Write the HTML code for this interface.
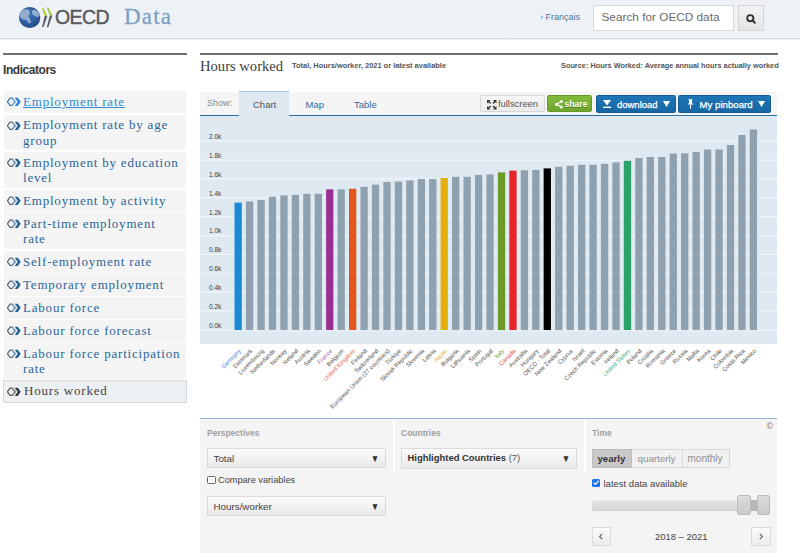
<!DOCTYPE html>
<html><head><meta charset="utf-8">
<style>
html,body{margin:0;padding:0;width:800px;height:558px;overflow:hidden;background:#fff;}
body{position:relative;font-family:"Liberation Sans",sans-serif;}
.a{position:absolute;}
#hdr{left:0;top:0;width:800px;height:38px;background:linear-gradient(#eef2f7 85%,#f1f4f8);border-bottom:1px solid #d3d8dc;box-shadow:0 0.5px 1px rgba(0,0,0,0.06);}
.logo-oecd{left:55px;top:6px;font-size:19.5px;color:#58595d;-webkit-text-stroke:0.4px #58595d;letter-spacing:-0.6px;font-weight:normal;}
.logo-data{left:124px;top:4px;font-family:"Liberation Serif",serif;font-size:23px;color:#7ba2c4;letter-spacing:1.2px;-webkit-text-stroke:0.3px #7ba2c4;}
.fr{left:540px;top:11.6px;font-size:9px;color:#4a7299;}
.search{left:592.5px;top:4.5px;width:141px;height:26px;background:#fff;border:1px solid #d7dbe0;box-sizing:border-box;}
.search span{position:absolute;left:8px;top:4.5px;font-size:11.8px;color:#6a6a6a;}
.sbtn{left:737.5px;top:4.5px;width:26.5px;height:26px;background:linear-gradient(#f3f3f3,#e4e4e4);border:1px solid #d5d5d5;box-sizing:border-box;}
/* sidebar */
.rule{height:1.5px;background:#6f6f6f;}
.ind{left:3px;top:62.5px;font-size:12px;font-weight:bold;color:#3a3a3a;letter-spacing:-0.45px;}
.item{left:4px;width:182px;background:#f4f4f4;}
.item .t{position:absolute;left:19px;top:2.8px;font-family:"Liberation Serif",serif;font-size:13px;line-height:15.4px;color:#2a6699;letter-spacing:0.8px;width:175px;white-space:nowrap;}
.item svg{position:absolute;left:3px;}
/* main */
.title{left:200px;top:58px;font-family:"Liberation Serif",serif;font-size:14.6px;color:#3d3d3d;}
.sub{left:292px;top:61.2px;font-size:7.45px;font-weight:bold;color:#555;}
.src{left:561px;top:61px;font-size:7.35px;font-weight:bold;color:#555;}
.sel{background:linear-gradient(#fbfbfb,#e9e9e9);border:1px solid #dadada;box-sizing:border-box;}
.sel span{position:absolute;top:3.8px;font-size:9.8px;color:#444;}
.sel i{position:absolute;right:5px;top:4px;font-style:normal;font-size:10px;color:#333;transform:scaleX(0.85);}
</style></head><body>
<div id="hdr" class="a"></div>
<!-- logo -->
<svg class="a" style="left:17px;top:5px" width="40" height="26" viewBox="0 0 40 26">
  <defs>
    <radialGradient id="gl" cx="0.4" cy="0.35" r="0.7">
      <stop offset="0" stop-color="#4677b8"/><stop offset="0.65" stop-color="#2c5b9e"/><stop offset="1" stop-color="#214680"/>
    </radialGradient>
  </defs>
  <circle cx="12.7" cy="12.5" r="10.6" fill="url(#gl)"/>
  <path d="M3.5 5.8 L8 4.3 L12.3 5 L12.8 8.5 L11.2 11.5 L13.2 14 L11.8 16.5 L9 15 L6 14.6 L3 12.2 L2.3 8.5 Z" fill="#a9bcd6" opacity="0.8"/>
  <path d="M15 5.5 L18.3 4.8 L21.2 7.3 L22.4 10.8 L20.3 12.6 L17.2 10.6 L15.2 9.2 Z" fill="#a9c0dd" opacity="0.8"/>
  <path d="M10.3 14.8 L13.8 15.2 L14.2 18.3 L11 18.2 Z" fill="#9fb8da" opacity="0.75"/>
  <path d="M25 3.3 L26.7 3.3 L30.3 10.9 L27.7 10.9 Z" fill="#aac942"/>
  <path d="M27.7 10.9 L30.3 10.9 L26.5 22 L25 22 Z" fill="#5c5c69"/>
  <path d="M29.6 2.4 L31.5 2.4 L35.4 10.5 L32.8 10.5 Z" fill="#aac942"/>
  <path d="M32.8 10.5 L35.4 10.5 L31.3 22.3 L29.8 22.3 Z" fill="#5c5c69"/>
</svg>
<div class="a logo-oecd">OECD</div>
<div class="a logo-data">Data</div>
<div class="a fr">› Français</div>
<div class="a search"><span>Search for OECD data</span></div>
<div class="a sbtn"><svg width="25" height="24" viewBox="0 0 25 24"><circle cx="11.3" cy="12.2" r="3.1" fill="none" stroke="#333" stroke-width="1.9"/><path d="M13.4 14.3 L15.8 16.7" stroke="#333" stroke-width="2.1" stroke-linecap="round"/></svg></div>

<!-- sidebar -->
<div class="a rule" style="left:3px;top:53px;width:184px"></div>
<div class="a ind">Indicators</div>
<div class="a item" style="top:91px;height:21.5px;"><svg width="16" height="12" viewBox="0 0 16 12" style="top:5px"><path d="M0.4 5.8 L3.1 2.2 L5.3 2.2 L7.9 5.8 L5.3 9.4 L3.1 9.4 Z" fill="none" stroke="#3d74a8" stroke-width="1.2" stroke-linejoin="miter"/><path d="M5.7 2.2 L8.9 5.8 L5.7 9.4" fill="none" stroke="#9cc8ec" stroke-width="1.2"/><path d="M7.8 1.7 L10.7 1.7 L13.7 5.8 L10.7 9.9 L7.8 9.9 L10.8 5.8 Z" fill="#1f86d6"/></svg><div class="t" style="color:#2a8ad4;text-decoration:underline;">Employment rate</div></div>
<div class="a item" style="top:114.6px;height:35.6px;"><svg width="16" height="12" viewBox="0 0 16 12" style="top:5px"><path d="M0.4 5.8 L3.1 2.2 L5.3 2.2 L7.9 5.8 L5.3 9.4 L3.1 9.4 Z" fill="none" stroke="#5a6672" stroke-width="1.2" stroke-linejoin="miter"/><path d="M5.7 2.2 L8.9 5.8 L5.7 9.4" fill="none" stroke="#8fb5d8" stroke-width="1.2"/><path d="M7.8 1.7 L10.7 1.7 L13.7 5.8 L10.7 9.9 L7.8 9.9 L10.8 5.8 Z" fill="#1b5f98"/></svg><div class="t" style="">Employment rate by age<br>group</div></div>
<div class="a item" style="top:152px;height:36px;"><svg width="16" height="12" viewBox="0 0 16 12" style="top:5px"><path d="M0.4 5.8 L3.1 2.2 L5.3 2.2 L7.9 5.8 L5.3 9.4 L3.1 9.4 Z" fill="none" stroke="#5a6672" stroke-width="1.2" stroke-linejoin="miter"/><path d="M5.7 2.2 L8.9 5.8 L5.7 9.4" fill="none" stroke="#8fb5d8" stroke-width="1.2"/><path d="M7.8 1.7 L10.7 1.7 L13.7 5.8 L10.7 9.9 L7.8 9.9 L10.8 5.8 Z" fill="#1b5f98"/></svg><div class="t" style="">Employment by education<br>level</div></div>
<div class="a item" style="top:190px;height:21.5px;"><svg width="16" height="12" viewBox="0 0 16 12" style="top:5px"><path d="M0.4 5.8 L3.1 2.2 L5.3 2.2 L7.9 5.8 L5.3 9.4 L3.1 9.4 Z" fill="none" stroke="#5a6672" stroke-width="1.2" stroke-linejoin="miter"/><path d="M5.7 2.2 L8.9 5.8 L5.7 9.4" fill="none" stroke="#8fb5d8" stroke-width="1.2"/><path d="M7.8 1.7 L10.7 1.7 L13.7 5.8 L10.7 9.9 L7.8 9.9 L10.8 5.8 Z" fill="#1b5f98"/></svg><div class="t" style="">Employment by activity</div></div>
<div class="a item" style="top:213px;height:36px;"><svg width="16" height="12" viewBox="0 0 16 12" style="top:5px"><path d="M0.4 5.8 L3.1 2.2 L5.3 2.2 L7.9 5.8 L5.3 9.4 L3.1 9.4 Z" fill="none" stroke="#5a6672" stroke-width="1.2" stroke-linejoin="miter"/><path d="M5.7 2.2 L8.9 5.8 L5.7 9.4" fill="none" stroke="#8fb5d8" stroke-width="1.2"/><path d="M7.8 1.7 L10.7 1.7 L13.7 5.8 L10.7 9.9 L7.8 9.9 L10.8 5.8 Z" fill="#1b5f98"/></svg><div class="t" style="">Part-time employment<br>rate</div></div>
<div class="a item" style="top:251px;height:21.5px;"><svg width="16" height="12" viewBox="0 0 16 12" style="top:5px"><path d="M0.4 5.8 L3.1 2.2 L5.3 2.2 L7.9 5.8 L5.3 9.4 L3.1 9.4 Z" fill="none" stroke="#5a6672" stroke-width="1.2" stroke-linejoin="miter"/><path d="M5.7 2.2 L8.9 5.8 L5.7 9.4" fill="none" stroke="#8fb5d8" stroke-width="1.2"/><path d="M7.8 1.7 L10.7 1.7 L13.7 5.8 L10.7 9.9 L7.8 9.9 L10.8 5.8 Z" fill="#1b5f98"/></svg><div class="t" style="">Self-employment rate</div></div>
<div class="a item" style="top:274px;height:21.5px;"><svg width="16" height="12" viewBox="0 0 16 12" style="top:5px"><path d="M0.4 5.8 L3.1 2.2 L5.3 2.2 L7.9 5.8 L5.3 9.4 L3.1 9.4 Z" fill="none" stroke="#5a6672" stroke-width="1.2" stroke-linejoin="miter"/><path d="M5.7 2.2 L8.9 5.8 L5.7 9.4" fill="none" stroke="#8fb5d8" stroke-width="1.2"/><path d="M7.8 1.7 L10.7 1.7 L13.7 5.8 L10.7 9.9 L7.8 9.9 L10.8 5.8 Z" fill="#1b5f98"/></svg><div class="t" style="">Temporary employment</div></div>
<div class="a item" style="top:297px;height:21.5px;"><svg width="16" height="12" viewBox="0 0 16 12" style="top:5px"><path d="M0.4 5.8 L3.1 2.2 L5.3 2.2 L7.9 5.8 L5.3 9.4 L3.1 9.4 Z" fill="none" stroke="#5a6672" stroke-width="1.2" stroke-linejoin="miter"/><path d="M5.7 2.2 L8.9 5.8 L5.7 9.4" fill="none" stroke="#8fb5d8" stroke-width="1.2"/><path d="M7.8 1.7 L10.7 1.7 L13.7 5.8 L10.7 9.9 L7.8 9.9 L10.8 5.8 Z" fill="#1b5f98"/></svg><div class="t" style="">Labour force</div></div>
<div class="a item" style="top:320px;height:21.5px;"><svg width="16" height="12" viewBox="0 0 16 12" style="top:5px"><path d="M0.4 5.8 L3.1 2.2 L5.3 2.2 L7.9 5.8 L5.3 9.4 L3.1 9.4 Z" fill="none" stroke="#5a6672" stroke-width="1.2" stroke-linejoin="miter"/><path d="M5.7 2.2 L8.9 5.8 L5.7 9.4" fill="none" stroke="#8fb5d8" stroke-width="1.2"/><path d="M7.8 1.7 L10.7 1.7 L13.7 5.8 L10.7 9.9 L7.8 9.9 L10.8 5.8 Z" fill="#1b5f98"/></svg><div class="t" style="">Labour force forecast</div></div>
<div class="a item" style="top:343px;height:36px;"><svg width="16" height="12" viewBox="0 0 16 12" style="top:5px"><path d="M0.4 5.8 L3.1 2.2 L5.3 2.2 L7.9 5.8 L5.3 9.4 L3.1 9.4 Z" fill="none" stroke="#5a6672" stroke-width="1.2" stroke-linejoin="miter"/><path d="M5.7 2.2 L8.9 5.8 L5.7 9.4" fill="none" stroke="#8fb5d8" stroke-width="1.2"/><path d="M7.8 1.7 L10.7 1.7 L13.7 5.8 L10.7 9.9 L7.8 9.9 L10.8 5.8 Z" fill="#1b5f98"/></svg><div class="t" style="">Labour force participation<br>rate</div></div>
<div class="a item" style="top:380px;height:22.8px;background:#edf0f3;border:1px solid #d5dbe1;box-sizing:border-box;left:3px;width:184px;"><svg width="16" height="12" viewBox="0 0 16 12" style="top:4.5px"><path d="M0.4 5.8 L3.1 2.2 L5.3 2.2 L7.9 5.8 L5.3 9.4 L3.1 9.4 Z" fill="none" stroke="#555" stroke-width="1.2" stroke-linejoin="miter"/><path d="M5.7 2.2 L8.9 5.8 L5.7 9.4" fill="none" stroke="#999" stroke-width="1.2"/><path d="M7.8 1.7 L10.7 1.7 L13.7 5.8 L10.7 9.9 L7.8 9.9 L10.8 5.8 Z" fill="#333"/></svg><div class="t" style="color:#444;left:20px;top:2.2px;">Hours worked</div></div>

<!-- main -->
<div class="a rule" style="left:200px;top:53px;width:578px"></div>
<div class="a title">Hours worked</div>
<div class="a sub">Total, Hours/worker, 2021 or latest available</div>
<div class="a src">Source: Hours Worked: Average annual hours actually worked</div>
<!-- tabs bar -->
<div class="a" style="left:200px;top:92px;width:577px;height:23px;background:#f5f5f5;"></div>
<div class="a" style="left:239.3px;top:91px;width:50px;height:26px;background:#dee9f2;border-top:1px solid #a9c7dc;box-sizing:border-box;"></div>
<div class="a" style="left:200px;top:115px;width:39px;height:1.4px;background:#2b6e9f;"></div>
<div class="a" style="left:289px;top:115px;width:488px;height:1.4px;background:#2b6e9f;"></div>
<div class="a" style="left:207px;top:97.8px;font-size:9px;color:#8a8a8a;">Show:</div>
<div class="a" style="left:253px;top:98.8px;font-size:9.5px;color:#555;">Chart</div>
<div class="a" style="left:305.5px;top:98.8px;font-size:9.5px;color:#2f6a9e;">Map</div>
<div class="a" style="left:354px;top:98.8px;font-size:9.5px;color:#2f6a9e;">Table</div>
<!-- buttons -->
<div class="a" style="left:480px;top:95.3px;width:64.5px;height:17.2px;background:linear-gradient(#f6f6f6,#ebebeb);border:1px solid #d6d6d6;box-sizing:border-box;border-radius:1.5px;"></div>
<svg class="a" style="left:487px;top:100px" width="9.5" height="9.5" viewBox="0 0 9.5 9.5"><g fill="#333"><path d="M0 0 L3.6 0 L0 3.6 Z"/><path d="M9.5 0 L5.9 0 L9.5 3.6 Z"/><path d="M0 9.5 L3.6 9.5 L0 5.9 Z"/><path d="M9.5 9.5 L5.9 9.5 L9.5 5.9 Z"/></g><path d="M1.5 1.5 L3.6 3.6 M8 1.5 L5.9 3.6 M1.5 8 L3.6 5.9 M8 8 L5.9 5.9" stroke="#333" stroke-width="1.4"/></svg>
<div class="a" style="left:498px;top:99.4px;font-size:9.35px;color:#555;">fullscreen</div>
<div class="a" style="left:547.2px;top:95.3px;width:45px;height:17.2px;background:linear-gradient(#82bb3c,#6ea62d);border:1px solid #64992a;box-sizing:border-box;border-radius:1.5px;"></div>
<svg class="a" style="left:554.5px;top:100px" width="8" height="8.5" viewBox="0 0 8 8.5"><circle cx="6.3" cy="1.5" r="1.5" fill="#fff"/><circle cx="1.6" cy="4.3" r="1.6" fill="#fff"/><circle cx="6.3" cy="7" r="1.5" fill="#fff"/><path d="M6.3 1.5 L1.6 4.3 L6.3 7" stroke="#fff" stroke-width="1.1" fill="none"/></svg>
<div class="a" style="left:564.5px;top:99.4px;font-size:8.6px;font-weight:bold;color:#fff;text-shadow:0 0.5px 0.5px rgba(0,0,0,0.35);">share</div>
<div class="a" style="left:595.6px;top:95.3px;width:80px;height:17.4px;background:linear-gradient(#1f76b6,#1766a4);border:1px solid #135b93;box-sizing:border-box;border-radius:1.5px;"></div>
<svg class="a" style="left:603.3px;top:99.8px" width="8" height="8.5" viewBox="0 0 8 8.5"><path d="M0 0 L8 0 L4 5.6 Z" fill="#fff"/><rect x="0" y="6.6" width="8" height="1.6" fill="#fff"/></svg>
<div class="a" style="left:617px;top:98.8px;font-size:9.48px;color:#fff;-webkit-text-stroke:0.25px #fff;">download</div>
<svg class="a" style="left:663px;top:101px" width="7" height="6" viewBox="0 0 7 6"><path d="M0 0 L7 0 L3.5 6 Z" fill="#fff"/></svg>
<div class="a" style="left:678.4px;top:95.3px;width:92.3px;height:17.4px;background:linear-gradient(#1f76b6,#1766a4);border:1px solid #135b93;box-sizing:border-box;border-radius:1.5px;"></div>
<svg class="a" style="left:687px;top:99px" width="7" height="10" viewBox="0 0 7 10"><path d="M1.2 0.3 L5.8 0.3 L5 1.6 L5 4 L6.6 5.6 L0.4 5.6 L2 4 L2 1.6 Z" fill="#fff"/><rect x="3" y="5.6" width="1" height="4.2" fill="#fff"/></svg>
<div class="a" style="left:699.4px;top:98.8px;font-size:9.7px;color:#fff;-webkit-text-stroke:0.25px #fff;">My pinboard</div>
<svg class="a" style="left:757.5px;top:101px" width="7" height="6" viewBox="0 0 7 6"><path d="M0 0 L7 0 L3.5 6 Z" fill="#fff"/></svg>
<svg class="a" style="left:200px;top:116px" width="577" height="302" viewBox="200 116 577 302">
<rect x="200" y="116" width="577" height="228" fill="#dee9f2"/>
<rect x="200" y="329.50" width="577" height="1" fill="#f4f8fb"/>
<text x="209" y="327.80" font-size="6.5" fill="#404040" font-family="Liberation Sans">0.0k</text>
<rect x="200" y="310.62" width="577" height="1" fill="#f4f8fb"/>
<text x="209" y="308.92" font-size="6.5" fill="#404040" font-family="Liberation Sans">0.2k</text>
<rect x="200" y="291.74" width="577" height="1" fill="#f4f8fb"/>
<text x="209" y="290.04" font-size="6.5" fill="#404040" font-family="Liberation Sans">0.4k</text>
<rect x="200" y="272.86" width="577" height="1" fill="#f4f8fb"/>
<text x="209" y="271.16" font-size="6.5" fill="#404040" font-family="Liberation Sans">0.6k</text>
<rect x="200" y="253.98" width="577" height="1" fill="#f4f8fb"/>
<text x="209" y="252.28" font-size="6.5" fill="#404040" font-family="Liberation Sans">0.8k</text>
<rect x="200" y="235.10" width="577" height="1" fill="#f4f8fb"/>
<text x="209" y="233.40" font-size="6.5" fill="#404040" font-family="Liberation Sans">1.0k</text>
<rect x="200" y="216.22" width="577" height="1" fill="#f4f8fb"/>
<text x="209" y="214.52" font-size="6.5" fill="#404040" font-family="Liberation Sans">1.2k</text>
<rect x="200" y="197.34" width="577" height="1" fill="#f4f8fb"/>
<text x="209" y="195.64" font-size="6.5" fill="#404040" font-family="Liberation Sans">1.4k</text>
<rect x="200" y="178.46" width="577" height="1" fill="#f4f8fb"/>
<text x="209" y="176.76" font-size="6.5" fill="#404040" font-family="Liberation Sans">1.6k</text>
<rect x="200" y="159.58" width="577" height="1" fill="#f4f8fb"/>
<text x="209" y="157.88" font-size="6.5" fill="#404040" font-family="Liberation Sans">1.8k</text>
<rect x="200" y="140.70" width="577" height="1" fill="#f4f8fb"/>
<text x="209" y="139.00" font-size="6.5" fill="#404040" font-family="Liberation Sans">2.0k</text>
<rect x="234.50" y="202.6" width="7.3" height="127.40" fill="#1b8ad6"/>
<text x="241.35" y="351.3" font-size="6" fill="#4a86d8" text-anchor="end" transform="rotate(-45 241.35 351.3)" font-family="Liberation Sans">Germany</text>
<rect x="245.95" y="201.4" width="7.3" height="128.60" fill="#8fa1ae"/>
<text x="252.80" y="351.3" font-size="6" fill="#555" text-anchor="end" transform="rotate(-45 252.80 351.3)" font-family="Liberation Sans">Denmark</text>
<rect x="257.40" y="200" width="7.3" height="130.00" fill="#8fa1ae"/>
<text x="264.25" y="351.3" font-size="6" fill="#555" text-anchor="end" transform="rotate(-45 264.25 351.3)" font-family="Liberation Sans">Luxembourg</text>
<rect x="268.85" y="196.8" width="7.3" height="133.20" fill="#8fa1ae"/>
<text x="275.70" y="351.3" font-size="6" fill="#555" text-anchor="end" transform="rotate(-45 275.70 351.3)" font-family="Liberation Sans">Netherlands</text>
<rect x="280.30" y="195.4" width="7.3" height="134.60" fill="#8fa1ae"/>
<text x="287.15" y="351.3" font-size="6" fill="#555" text-anchor="end" transform="rotate(-45 287.15 351.3)" font-family="Liberation Sans">Norway</text>
<rect x="291.75" y="194.8" width="7.3" height="135.20" fill="#8fa1ae"/>
<text x="298.60" y="351.3" font-size="6" fill="#555" text-anchor="end" transform="rotate(-45 298.60 351.3)" font-family="Liberation Sans">Iceland</text>
<rect x="303.20" y="193.8" width="7.3" height="136.20" fill="#8fa1ae"/>
<text x="310.05" y="351.3" font-size="6" fill="#555" text-anchor="end" transform="rotate(-45 310.05 351.3)" font-family="Liberation Sans">Austria</text>
<rect x="314.65" y="193.8" width="7.3" height="136.20" fill="#8fa1ae"/>
<text x="321.50" y="351.3" font-size="6" fill="#555" text-anchor="end" transform="rotate(-45 321.50 351.3)" font-family="Liberation Sans">Sweden</text>
<rect x="326.10" y="189.4" width="7.3" height="140.60" fill="#98318f"/>
<text x="332.95" y="351.3" font-size="6" fill="#b06bb0" text-anchor="end" transform="rotate(-45 332.95 351.3)" font-family="Liberation Sans">France</text>
<rect x="337.55" y="189.4" width="7.3" height="140.60" fill="#8fa1ae"/>
<text x="344.40" y="351.3" font-size="6" fill="#555" text-anchor="end" transform="rotate(-45 344.40 351.3)" font-family="Liberation Sans">Belgium</text>
<rect x="349.00" y="188.8" width="7.3" height="141.20" fill="#e2571e"/>
<text x="355.85" y="351.3" font-size="6" fill="#e4705a" text-anchor="end" transform="rotate(-45 355.85 351.3)" font-family="Liberation Sans">United Kingdom</text>
<rect x="360.45" y="186.8" width="7.3" height="143.20" fill="#8fa1ae"/>
<text x="367.30" y="351.3" font-size="6" fill="#555" text-anchor="end" transform="rotate(-45 367.30 351.3)" font-family="Liberation Sans">Finland</text>
<rect x="371.90" y="184.6" width="7.3" height="145.40" fill="#8fa1ae"/>
<text x="378.75" y="351.3" font-size="6" fill="#555" text-anchor="end" transform="rotate(-45 378.75 351.3)" font-family="Liberation Sans">Switzerland</text>
<rect x="383.35" y="182" width="7.3" height="148.00" fill="#8fa1ae"/>
<text x="390.20" y="351.3" font-size="6" fill="#555" text-anchor="end" transform="rotate(-45 390.20 351.3)" font-family="Liberation Sans">European Union (27 countries)</text>
<rect x="394.80" y="181.6" width="7.3" height="148.40" fill="#8fa1ae"/>
<text x="401.65" y="351.3" font-size="6" fill="#555" text-anchor="end" transform="rotate(-45 401.65 351.3)" font-family="Liberation Sans">Türkiye</text>
<rect x="406.25" y="180.4" width="7.3" height="149.60" fill="#8fa1ae"/>
<text x="413.10" y="351.3" font-size="6" fill="#555" text-anchor="end" transform="rotate(-45 413.10 351.3)" font-family="Liberation Sans">Slovak Republic</text>
<rect x="417.70" y="179" width="7.3" height="151.00" fill="#8fa1ae"/>
<text x="424.55" y="351.3" font-size="6" fill="#555" text-anchor="end" transform="rotate(-45 424.55 351.3)" font-family="Liberation Sans">Slovenia</text>
<rect x="429.15" y="179" width="7.3" height="151.00" fill="#8fa1ae"/>
<text x="436.00" y="351.3" font-size="6" fill="#555" text-anchor="end" transform="rotate(-45 436.00 351.3)" font-family="Liberation Sans">Latvia</text>
<rect x="440.60" y="178" width="7.3" height="152.00" fill="#e3b00b"/>
<text x="447.45" y="351.3" font-size="6" fill="#e0b040" text-anchor="end" transform="rotate(-45 447.45 351.3)" font-family="Liberation Sans">Japan</text>
<rect x="452.05" y="176.8" width="7.3" height="153.20" fill="#8fa1ae"/>
<text x="458.90" y="351.3" font-size="6" fill="#555" text-anchor="end" transform="rotate(-45 458.90 351.3)" font-family="Liberation Sans">Bulgaria</text>
<rect x="463.50" y="176.8" width="7.3" height="153.20" fill="#8fa1ae"/>
<text x="470.35" y="351.3" font-size="6" fill="#555" text-anchor="end" transform="rotate(-45 470.35 351.3)" font-family="Liberation Sans">Lithuania</text>
<rect x="474.95" y="175" width="7.3" height="155.00" fill="#8fa1ae"/>
<text x="481.80" y="351.3" font-size="6" fill="#555" text-anchor="end" transform="rotate(-45 481.80 351.3)" font-family="Liberation Sans">Spain</text>
<rect x="486.40" y="174.4" width="7.3" height="155.60" fill="#8fa1ae"/>
<text x="493.25" y="351.3" font-size="6" fill="#555" text-anchor="end" transform="rotate(-45 493.25 351.3)" font-family="Liberation Sans">Portugal</text>
<rect x="497.85" y="172.4" width="7.3" height="157.60" fill="#6b9a2a"/>
<text x="504.70" y="351.3" font-size="6" fill="#7fa84a" text-anchor="end" transform="rotate(-45 504.70 351.3)" font-family="Liberation Sans">Italy</text>
<rect x="509.30" y="170.6" width="7.3" height="159.40" fill="#e5252a"/>
<text x="516.15" y="351.3" font-size="6" fill="#e44a4a" text-anchor="end" transform="rotate(-45 516.15 351.3)" font-family="Liberation Sans">Canada</text>
<rect x="520.75" y="170.2" width="7.3" height="159.80" fill="#8fa1ae"/>
<text x="527.60" y="351.3" font-size="6" fill="#555" text-anchor="end" transform="rotate(-45 527.60 351.3)" font-family="Liberation Sans">Australia</text>
<rect x="532.20" y="170" width="7.3" height="160.00" fill="#8fa1ae"/>
<text x="539.05" y="351.3" font-size="6" fill="#555" text-anchor="end" transform="rotate(-45 539.05 351.3)" font-family="Liberation Sans">Hungary</text>
<rect x="543.65" y="168.4" width="7.3" height="161.60" fill="#000000"/>
<text x="550.50" y="351.3" font-size="6" fill="#555" text-anchor="end" transform="rotate(-45 550.50 351.3)" font-family="Liberation Sans">OECD - Total</text>
<rect x="555.10" y="166.8" width="7.3" height="163.20" fill="#8fa1ae"/>
<text x="561.95" y="351.3" font-size="6" fill="#555" text-anchor="end" transform="rotate(-45 561.95 351.3)" font-family="Liberation Sans">New Zealand</text>
<rect x="566.55" y="165.8" width="7.3" height="164.20" fill="#8fa1ae"/>
<text x="573.40" y="351.3" font-size="6" fill="#555" text-anchor="end" transform="rotate(-45 573.40 351.3)" font-family="Liberation Sans">Cyprus</text>
<rect x="578.00" y="164.8" width="7.3" height="165.20" fill="#8fa1ae"/>
<text x="584.85" y="351.3" font-size="6" fill="#555" text-anchor="end" transform="rotate(-45 584.85 351.3)" font-family="Liberation Sans">Israel</text>
<rect x="589.45" y="164.8" width="7.3" height="165.20" fill="#8fa1ae"/>
<text x="596.30" y="351.3" font-size="6" fill="#555" text-anchor="end" transform="rotate(-45 596.30 351.3)" font-family="Liberation Sans">Czech Republic</text>
<rect x="600.90" y="163.8" width="7.3" height="166.20" fill="#8fa1ae"/>
<text x="607.75" y="351.3" font-size="6" fill="#555" text-anchor="end" transform="rotate(-45 607.75 351.3)" font-family="Liberation Sans">Estonia</text>
<rect x="612.35" y="162.4" width="7.3" height="167.60" fill="#8fa1ae"/>
<text x="619.20" y="351.3" font-size="6" fill="#555" text-anchor="end" transform="rotate(-45 619.20 351.3)" font-family="Liberation Sans">Ireland</text>
<rect x="623.80" y="160.8" width="7.3" height="169.20" fill="#2ba26a"/>
<text x="630.65" y="351.3" font-size="6" fill="#4fae86" text-anchor="end" transform="rotate(-45 630.65 351.3)" font-family="Liberation Sans">United States</text>
<rect x="635.25" y="158" width="7.3" height="172.00" fill="#8fa1ae"/>
<text x="642.10" y="351.3" font-size="6" fill="#555" text-anchor="end" transform="rotate(-45 642.10 351.3)" font-family="Liberation Sans">Poland</text>
<rect x="646.70" y="157" width="7.3" height="173.00" fill="#8fa1ae"/>
<text x="653.55" y="351.3" font-size="6" fill="#555" text-anchor="end" transform="rotate(-45 653.55 351.3)" font-family="Liberation Sans">Croatia</text>
<rect x="658.15" y="157" width="7.3" height="173.00" fill="#8fa1ae"/>
<text x="665.00" y="351.3" font-size="6" fill="#555" text-anchor="end" transform="rotate(-45 665.00 351.3)" font-family="Liberation Sans">Romania</text>
<rect x="669.60" y="153.6" width="7.3" height="176.40" fill="#8fa1ae"/>
<text x="676.45" y="351.3" font-size="6" fill="#555" text-anchor="end" transform="rotate(-45 676.45 351.3)" font-family="Liberation Sans">Greece</text>
<rect x="681.05" y="153.3" width="7.3" height="176.70" fill="#8fa1ae"/>
<text x="687.90" y="351.3" font-size="6" fill="#555" text-anchor="end" transform="rotate(-45 687.90 351.3)" font-family="Liberation Sans">Russia</text>
<rect x="692.50" y="152" width="7.3" height="178.00" fill="#8fa1ae"/>
<text x="699.35" y="351.3" font-size="6" fill="#555" text-anchor="end" transform="rotate(-45 699.35 351.3)" font-family="Liberation Sans">Malta</text>
<rect x="703.95" y="149.5" width="7.3" height="180.50" fill="#8fa1ae"/>
<text x="710.80" y="351.3" font-size="6" fill="#555" text-anchor="end" transform="rotate(-45 710.80 351.3)" font-family="Liberation Sans">Korea</text>
<rect x="715.40" y="149.5" width="7.3" height="180.50" fill="#8fa1ae"/>
<text x="722.25" y="351.3" font-size="6" fill="#555" text-anchor="end" transform="rotate(-45 722.25 351.3)" font-family="Liberation Sans">Chile</text>
<rect x="726.85" y="145" width="7.3" height="185.00" fill="#8fa1ae"/>
<text x="733.70" y="351.3" font-size="6" fill="#555" text-anchor="end" transform="rotate(-45 733.70 351.3)" font-family="Liberation Sans">Colombia</text>
<rect x="738.30" y="135" width="7.3" height="195.00" fill="#8fa1ae"/>
<text x="745.15" y="351.3" font-size="6" fill="#555" text-anchor="end" transform="rotate(-45 745.15 351.3)" font-family="Liberation Sans">Costa Rica</text>
<rect x="749.75" y="129.5" width="7.3" height="200.50" fill="#8fa1ae"/>
<text x="756.60" y="351.3" font-size="6" fill="#555" text-anchor="end" transform="rotate(-45 756.60 351.3)" font-family="Liberation Sans">Mexico</text>
</svg>
<!-- bottom blue line -->
<div class="a" style="left:200px;top:418px;width:577px;height:1px;background:#8fb7d3;"></div>
<div class="a" style="left:200px;top:419px;width:577px;height:134px;background:#f4f4f4;"></div>
<div class="a" style="left:393px;top:419px;width:2px;height:53px;background:#fff;"></div>
<div class="a" style="left:584px;top:419px;width:2px;height:53px;background:#fff;"></div>
<!-- perspectives -->
<div class="a" style="left:207px;top:428px;font-size:8.5px;font-weight:bold;color:#a0a0a0;">Perspectives</div>
<div class="a sel" style="left:207px;top:448px;width:178.5px;height:20px;"><span style="left:5.5px;">Total</span><i>▼</i></div>
<div class="a" style="left:207px;top:476px;width:8.5px;height:8px;border:1px solid #666;background:#fff;box-sizing:border-box;border-radius:1.5px;"></div>
<div class="a" style="left:218px;top:475px;font-size:9.2px;color:#444;">Compare variables</div>
<div class="a sel" style="left:207px;top:496px;width:178.5px;height:20px;"><span style="left:5.5px;">Hours/worker</span><i>▼</i></div>
<!-- countries -->
<div class="a" style="left:401px;top:428px;font-size:8.5px;font-weight:bold;color:#a0a0a0;">Countries</div>
<div class="a sel" style="left:401px;top:448px;width:176px;height:20.5px;"><span style="left:5.5px;font-weight:bold;color:#333;font-size:9.45px;top:2.6px;">Highlighted Countries <b style="font-weight:normal;color:#555">(7)</b></span><i>▼</i></div>
<!-- time -->
<div class="a" style="left:592px;top:428px;font-size:8.5px;font-weight:bold;color:#a0a0a0;">Time</div>
<div class="a" style="left:766.5px;top:420.5px;font-size:9px;color:#777;">©</div>
<div class="a" style="left:592.3px;top:448.6px;width:137.3px;height:19.7px;border:1px solid #d8d8d8;background:#f1f1f1;box-sizing:border-box;"></div>
<div class="a" style="left:592.3px;top:448.6px;width:39.4px;height:19.7px;background:#c9c9c9;border:1px solid #bdbdbd;box-sizing:border-box;"></div>
<div class="a" style="left:682px;top:449px;width:1px;height:19px;background:#d8d8d8;"></div>
<div class="a" style="left:597.5px;top:452.5px;font-size:9.6px;font-weight:bold;color:#333;">yearly</div>
<div class="a" style="left:637.5px;top:452.5px;font-size:9.8px;color:#8f8f8f;">quarterly</div>
<div class="a" style="left:687.5px;top:452.5px;font-size:10px;color:#8f8f8f;">monthly</div>
<div class="a" style="left:592.3px;top:479.3px;width:8.2px;height:7.4px;background:#1a73e8;border-radius:1.5px;"></div>
<svg class="a" style="left:592.3px;top:479.3px" width="8.2" height="7.4" viewBox="0 0 8 7.4"><path d="M1.6 3.8 L3.3 5.4 L6.6 1.8" stroke="#fff" stroke-width="1.3" fill="none"/></svg>
<div class="a" style="left:603.5px;top:478px;font-size:9.5px;color:#444;">latest data available</div>
<div class="a" style="left:592.3px;top:499.5px;width:177.7px;height:11.8px;background:linear-gradient(#e6e6e6,#d4d4d4);border-radius:2px;"></div>
<div class="a" style="left:750px;top:500px;width:7px;height:11px;background:#b8b8b8;"></div>
<div class="a" style="left:736.8px;top:495px;width:13.8px;height:20.3px;background:linear-gradient(#dcdcdc,#cacaca);border:1px solid #bbb;box-sizing:border-box;border-radius:2px;"></div>
<div class="a" style="left:757px;top:495px;width:13.3px;height:20.3px;background:linear-gradient(#dcdcdc,#cacaca);border:1px solid #bbb;box-sizing:border-box;border-radius:2px;"></div>
<div class="a" style="left:592.3px;top:526.5px;width:18.4px;height:19.7px;background:linear-gradient(#fafafa,#ececec);border:1px solid #dcdcdc;box-sizing:border-box;"></div>
<svg class="a" style="left:598px;top:532px" width="6" height="9" viewBox="0 0 6 9"><path d="M4.2 1.8 L1.6 4.5 L4.2 7.2" stroke="#666" stroke-width="1.2" fill="none"/></svg>
<div class="a" style="left:751px;top:526.5px;width:19.8px;height:19.7px;background:linear-gradient(#fafafa,#ececec);border:1px solid #dcdcdc;box-sizing:border-box;"></div>
<svg class="a" style="left:758px;top:532px" width="6" height="9" viewBox="0 0 6 9"><path d="M1.8 1.8 L4.4 4.5 L1.8 7.2" stroke="#666" stroke-width="1.2" fill="none"/></svg>
<div class="a" style="left:655px;top:531px;font-size:9.45px;color:#444;">2018 – 2021</div>

</body></html>
